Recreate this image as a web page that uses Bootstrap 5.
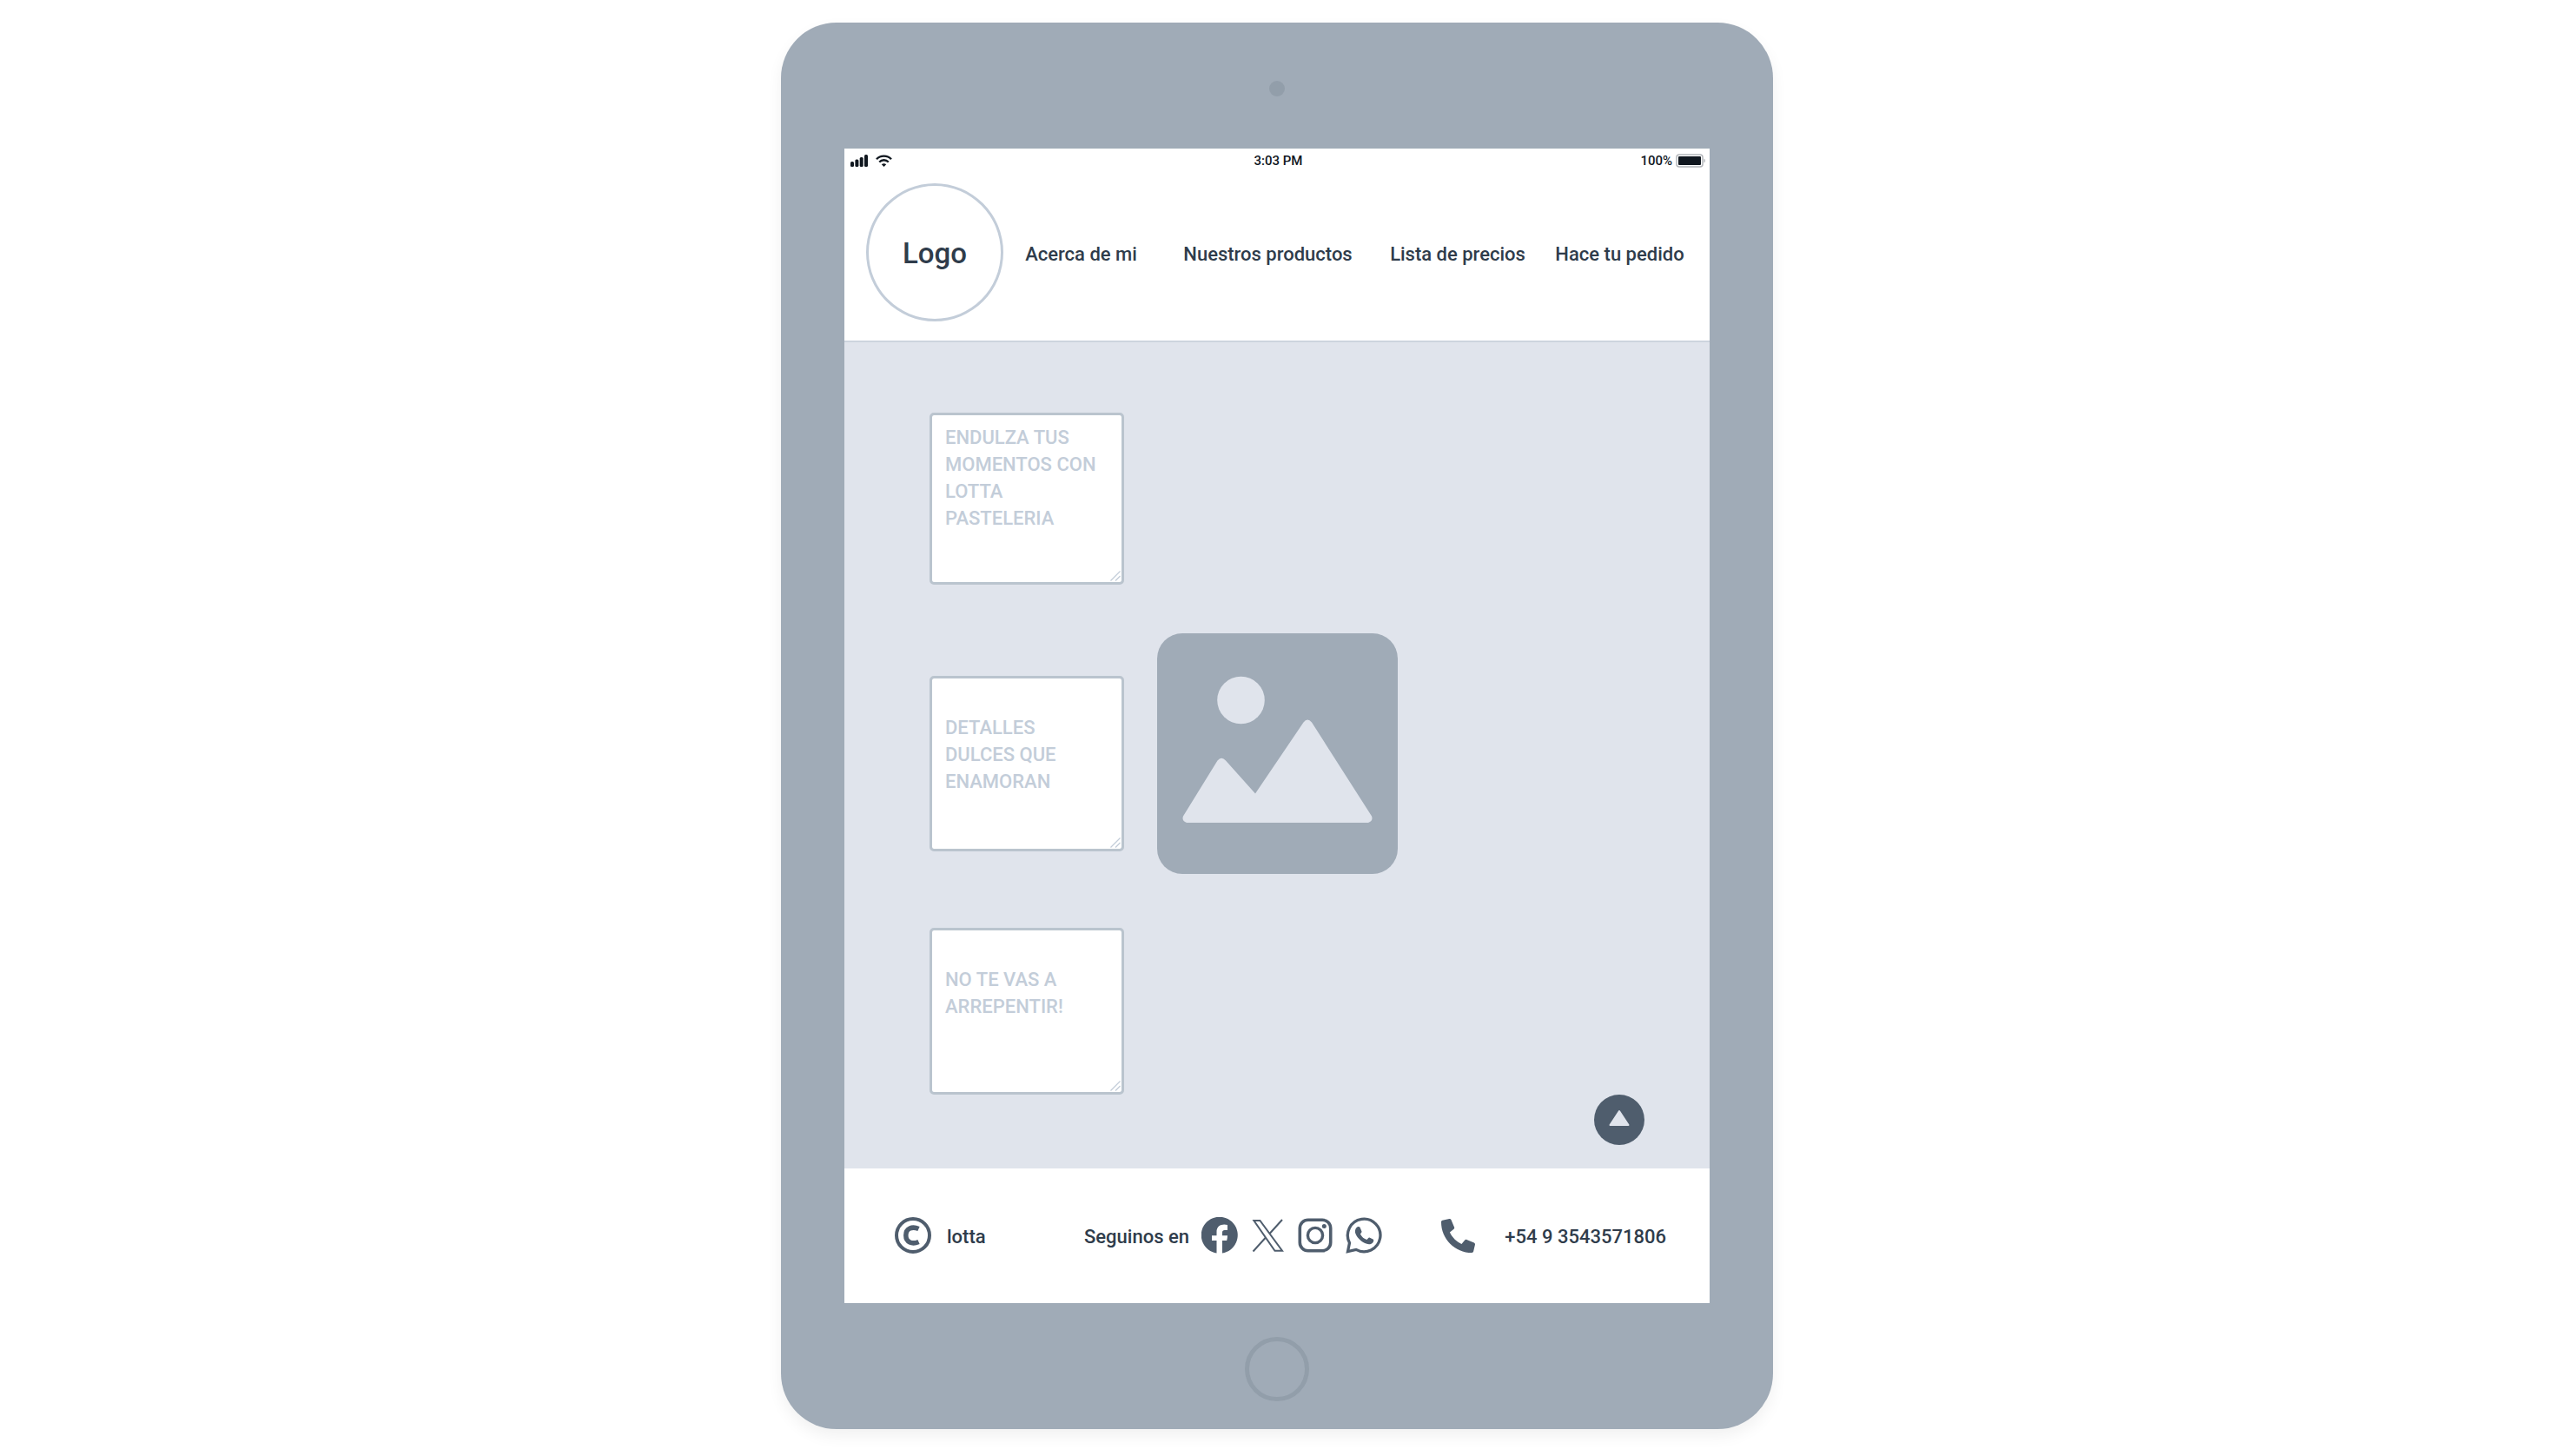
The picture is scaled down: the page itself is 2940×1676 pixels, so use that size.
<!DOCTYPE html>
<html lang="es">
<head>
<meta charset="utf-8">
<meta name="viewport" content="width=device-width, initial-scale=1">
<title>Lotta Pastelería</title>
<link href="https://cdn.jsdelivr.net/npm/bootstrap@5.3.0/dist/css/bootstrap.min.css" rel="stylesheet">
<style>
  :root { --shell: #a0abb7; --shell-dark: #929eaa; --panel: #e0e4ec; --ink: #2f3c4b; --icon: #4f5d6d; --line: #c3cdd9; }
  body { font-family: Roboto, "Liberation Sans", sans-serif; font-weight: 500; font-size: 22px; line-height: 31px; color: var(--ink); background: #fff; padding: 26px 0 30px; }
  .tablet { max-width: 1142px; background: var(--shell); border-radius: 64px; padding: 0 73px; box-shadow: 0 8px 18px rgba(0, 0, 0, .06); }
  .bezel { height: 145px; padding-top: 6px; }
  .camera { width: 18px; height: 18px; background: var(--shell-dark); }
  .home-btn { width: 74px; height: 74px; border: 5px solid var(--shell-dark); background: none; }
  .status-row { height: 28px; padding: 0 4px 0 7px; font-size: 15px; line-height: 16px; color: #10171f; display: grid; grid-template-columns: 1fr auto 1fr; }
  .site-head { border-bottom: 2px solid #cdd4de; padding: 12px 10px 22px 25px; }
  .logo-ring { width: 158px; height: 159px; padding-top: 2px; border: 3px solid var(--line); font-size: 33px; color: var(--ink); }
  .menu-grid { grid-template-columns: 179fr 251fr 186fr 187fr; padding-top: 3px; }
  .menu-grid a, .foot-grid a { color: var(--ink); text-decoration: none; white-space: nowrap; }
  .hero { background: var(--panel); display: grid; grid-template-columns: 1fr 277px 1fr; padding: 81px 0 85px; }
  .phrases { padding-left: 98px; }
  .phrase { width: 224px; }
  .phrase textarea { height: 198px; resize: none; overflow: hidden; padding: 10px 15px; border: 3px solid #bac4ce; border-radius: 5px; font-size: 22px; font-weight: 500; line-height: 31px; }
  .phrase textarea::placeholder { color: var(--line); opacity: 1; }
  .phrase-mid { margin: 105px 0 88px; }
  .phrase-mid textarea { height: 202px; }
  .phrase-end textarea { height: 192px; }
  .grip { right: 4px; bottom: 4px; width: 12px; height: 12px; pointer-events: none; }
  .to-top { right: 75px; bottom: 27px; width: 58px; height: 58px; background: var(--icon); }
  .foot-grid { display: grid; grid-template-columns: 218fr 410fr 260fr; padding: 56px 50px 57px 58px; }
  .foot-grid svg { color: var(--icon); }
  .foot-grid span { padding-top: 3px; }
  .copy-row { gap: 18px; }
  .social-row { gap: 14px; }
  .phone-row { gap: 34px; }
</style>
</head>
<body>
<div class="tablet mx-auto">
  <div class="bezel d-flex justify-content-center align-items-center"><span class="camera rounded-circle"></span></div>
  <div class="bg-white">
    <div class="status-row align-items-center">
      <div class="d-flex align-items-center gap-2">
        <svg width="21" height="14" viewBox="0 0 21 14" fill="currentColor"><rect y="8" width="4" height="6" rx="1.5"/><rect x="5.4" y="5.5" width="4" height="8.500" rx="1.500"/><rect x="10.700" y="3" width="4" height="11" rx="1.500"/><rect x="16" y="0" width="4" height="14" rx="1.500"/></svg>
        <svg width="19" height="14" viewBox="0 0 19 14" fill="none" stroke="currentColor" stroke-width="2.400"><path d="M1 5.200C5.500.4 13.500.4 18 5.200M4.200 8.500c3-3 7.600-3 10.600 0"/><path d="M9.500 14 6.800 11.300c1.500-1.300 3.900-1.300 5.400 0z" fill="currentColor" stroke="none"/></svg>
      </div>
      <span>3:03 PM</span>
      <div class="d-flex align-items-center justify-content-end gap-1">
        <span>100%</span>
        <svg width="35" height="16" viewBox="0 0 35 16"><rect x="1" y="1" width="30" height="14" rx="3" fill="#fff" stroke="#b3b6ba" stroke-width="1.500"/><rect x="3" y="3" width="26" height="10" rx="1" fill="#10171f"/><path d="M32.500 5.500c2 1 2 4 0 5z" fill="#b3b6ba"/></svg>
      </div>
    </div>
    <header class="site-head d-flex align-items-center">
      <a href="#" class="logo-ring rounded-circle d-flex align-items-center justify-content-center flex-shrink-0 text-decoration-none">Logo</a>
      <nav class="menu-grid d-grid flex-grow-1 text-center">
        <a href="#">Acerca de mi</a>
        <a href="#">Nuestros productos</a>
        <a href="#">Lista de precios</a>
        <a href="#">Hace tu pedido</a>
      </nav>
    </header>
    <main class="hero position-relative align-items-center">
      <div class="phrases">
        <div class="phrase position-relative">
          <textarea class="form-control" aria-label="Frase principal" placeholder="ENDULZA TUS&#10;MOMENTOS CON&#10;LOTTA&#10;PASTELERIA"></textarea>
          <svg class="grip position-absolute" viewBox="0 0 12 12" stroke="#c3cdd9" stroke-width="1.300"><path d="M.5 11.500l11-11M6 11.500 11.500 6"/></svg>
        </div>
        <div class="phrase phrase-mid position-relative">
          <textarea class="form-control" aria-label="Segunda frase" placeholder="&#10;DETALLES&#10;DULCES QUE&#10;ENAMORAN"></textarea>
          <svg class="grip position-absolute" viewBox="0 0 12 12" stroke="#c3cdd9" stroke-width="1.300"><path d="M.5 11.500l11-11M6 11.500 11.500 6"/></svg>
        </div>
        <div class="phrase phrase-end position-relative">
          <textarea class="form-control" aria-label="Tercera frase" placeholder="&#10;NO TE VAS A&#10;ARREPENTIR!"></textarea>
          <svg class="grip position-absolute" viewBox="0 0 12 12" stroke="#c3cdd9" stroke-width="1.300"><path d="M.5 11.500l11-11M6 11.500 11.500 6"/></svg>
        </div>
      </div>
      <svg class="w-100" viewBox="0 0 277 277" role="img" aria-label="Imagen">
        <rect width="277" height="277" rx="29" fill="#a0abb7"/>
        <circle cx="96.500" cy="77" r="27.300" fill="#e0e4ec"/>
        <path d="M30 210.500 69.500 146.500Q74 141 79 146.500L113 184.500 168.500 102.500Q173 96.500 178 102.500L247 210.500Q249 216 243 218H34Q28 216 30 210.500z" fill="#e0e4ec"/>
      </svg>
      <button type="button" class="to-top btn p-0 border-0 rounded-circle position-absolute d-flex align-items-center justify-content-center" aria-label="Volver arriba">
        <svg width="58" height="58" viewBox="0 0 58 58"><path d="M29 19 39.500 35h-21z" fill="#e0e4ec" stroke="#e0e4ec" stroke-width="2" stroke-linejoin="round"/></svg>
      </button>
    </main>
    <footer class="foot-grid align-items-center">
      <div class="copy-row d-flex align-items-center">
        <svg width="42" height="42" viewBox="0 0 42 42" fill="none" stroke="currentColor"><circle cx="21" cy="21" r="19" stroke-width="4"/><path d="M27.500 13.600C20 10.200 12.800 13 12.800 21s7.200 10.800 14.700 7.400" stroke-width="5.500"/></svg>
        <span>lotta</span>
      </div>
      <div class="social-row d-flex align-items-center">
        <span class="text-nowrap">Seguinos en</span>
        <a href="#" class="d-flex" aria-label="Facebook"><svg width="42" height="42" viewBox="0 0 42 42"><path fill="currentColor" d="M17.500 41.500A21 21 0 1 1 24 41.500V27h5.200q.8-2.900.8-5.700h-6v-3.600c0-1.800 1-2.700 2.800-2.700H30V9q-3-.6-5.500-.3c-4.500.6-7 3.500-7 8.300v4.300H12V27h5.500z"/></svg></a>
        <a href="#" class="d-flex" aria-label="X"><svg width="40" height="42" viewBox="0 0 40 42" fill="none" stroke="currentColor" stroke-width="2"><path d="M4.400 4h7L37 38.700h-8.500zM3.500 39.500 18 23.500M37 3 23 18.500"/></svg></a>
        <a href="#" class="d-flex" aria-label="Instagram"><svg width="42" height="42" viewBox="0 0 42 42" fill="none" stroke="currentColor"><rect x="3.300" y="3.300" width="35.400" height="35.400" rx="9.500" stroke-width="3.600"/><circle cx="21" cy="21" r="8.600" stroke-width="3.400"/><circle cx="31.300" cy="10.600" r="2.500" fill="currentColor" stroke="none"/></svg></a>
        <a href="#" class="d-flex" aria-label="WhatsApp"><svg width="42" height="42" viewBox="0 0 42 42"><path d="M2.500 39.500 4.500 29.700A18.800 18.800 0 1 1 12 37.400z" fill="none" stroke="currentColor" stroke-width="3.300"/><path fill="currentColor" d="M13.600 11.300c1-.7 2.400-.5 2.900.5l2 4.600c.3.900-1 2.200-1.600 3 1.700 3.300 4.300 5.500 7.600 6.600.9-.8 1.800-2.500 2.900-2.400l4.100 2c1.200.6.800 2.200.1 3.300-1.500 2.300-4.700 2.700-7.200 1.900-6-1.900-10.400-6-12.800-11.200-1.400-3.100-.6-6.600 2-8.300z"/></svg></a>
      </div>
      <a href="tel:+5493543571806" class="phone-row d-flex align-items-center justify-content-end">
        <svg width="39" height="39" viewBox="0 0 512 512" class="flex-shrink-0"><path fill="currentColor" transform="translate(512 0) scale(-1 1)" d="M493.400 24.600l-104-24c-11.300-2.600-22.900 3.300-27.500 13.900l-48 112c-4.200 9.800-1.400 21.300 6.900 28l60.600 49.600c-36 76.700-98.900 140.500-177.200 177.200l-49.600-60.600c-6.800-8.300-18.200-11.100-28-6.900l-112 48C3.900 366.500-2 378.100.6 389.400l24 104C27.100 504.200 36.700 512 48 512c256.100 0 464-207.500 464-464 0-11.200-7.700-20.900-18.600-23.400z"/></svg>
        <span>+54 9 3543571806</span>
      </a>
    </footer>
  </div>
  <div class="bezel d-flex justify-content-center align-items-center"><button type="button" class="home-btn rounded-circle p-0" aria-label="Inicio"></button></div>
</div>
<script src="https://cdn.jsdelivr.net/npm/bootstrap@5.3.0/dist/js/bootstrap.bundle.min.js"></script>
</body>
</html>
